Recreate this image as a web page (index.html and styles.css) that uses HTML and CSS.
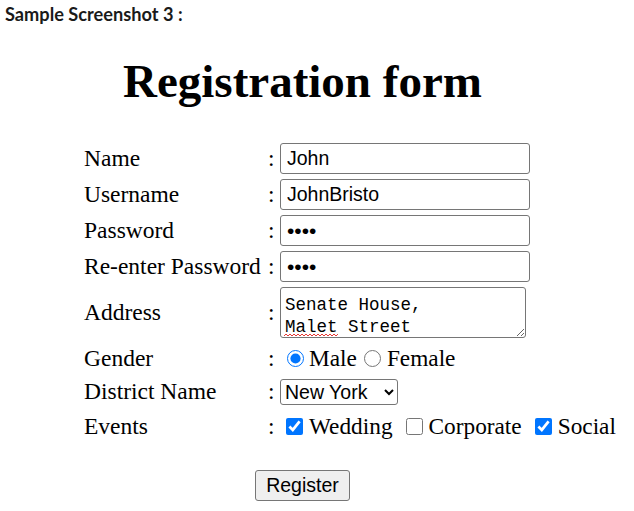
FILE: index.html
```html
<!DOCTYPE html>
<html>
<head>
<meta charset="utf-8">
<link rel="stylesheet" href="styles.css">
</head>
<body>
<div class="caption">Sample Screenshot 3 :</div>
<h1 class="title">Registration form</h1>
<form class="form">
  <div class="grid">
    <label class="lbl">Name</label><span class="colon">:</span>
    <div class="field"><input class="text" type="text" value="John"></div>

    <label class="lbl">Username</label><span class="colon">:</span>
    <div class="field"><input class="text" type="text" value="JohnBristo"></div>

    <label class="lbl">Password</label><span class="colon">:</span>
    <div class="field"><input class="text pw" type="password" value="abcd"></div>

    <label class="lbl">Re-enter Password</label><span class="colon">:</span>
    <div class="field"><input class="text pw" type="password" value="abcd"></div>

    <label class="lbl">Address</label><span class="colon">:</span>
    <div class="field area-wrap"><textarea class="area" spellcheck="false">Senate House,
Malet Street</textarea><svg class="squiggle" width="54" height="4" viewBox="0 0 54 4"><path d="M0 3 L2 1 L4 3 L6 1 L8 3 L10 1 L12 3 L14 1 L16 3 L18 1 L20 3 L22 1 L24 3 L26 1 L28 3 L30 1 L32 3 L34 1 L36 3 L38 1 L40 3 L42 1 L44 3 L46 1 L48 3 L50 1 L52 3 L54 1" fill="none" stroke="#e53935" stroke-width="1"/></svg></div>

    <label class="lbl">Gender</label><span class="colon">:</span>
    <div class="field opts gender">
      <input class="radio" type="radio" name="g" checked><span class="opt">Male</span>
      <input class="radio second" type="radio" name="g"><span class="opt">Female</span>
    </div>

    <label class="lbl">District Name</label><span class="colon">:</span>
    <div class="field"><select class="sel"><option>New York</option></select></div>

    <label class="lbl">Events</label><span class="colon">:</span>
    <div class="field opts events">
      <input class="check" type="checkbox" checked><span class="opt gap">Wedding</span>
      <input class="check" type="checkbox"><span class="opt gap">Corporate</span>
      <input class="check" type="checkbox" checked><span class="opt">Social</span>
    </div>
  </div>
  <div class="actions"><button class="btn" type="button">Register</button></div>
</form>
</body>
</html>
```
FILE: styles.css
```css
html, body {
  margin: 0;
  padding: 0;
  background: #fff;
}
body {
  font-family: "Liberation Serif", "Times New Roman", serif;
  color: #000;
}
.caption {
  font-family: Lato, "Liberation Sans", sans-serif;
  font-weight: 700;
  font-size: 18.2px;
  line-height: 22px;
  color: #1a1a1a;
  padding: 3px 0 0 5px;
}
.title {
  margin: 29px 0 0 123px;
  font-size: 47px;
  line-height: 54px;
  font-weight: 700;
}
.form {
  margin: 35px 0 0 84px;
}
.grid {
  display: grid;
  grid-template-columns: 184px 12px auto;
  row-gap: 5px;
  align-items: center;
  font-size: 23.5px;
  line-height: 27px;
}
.lbl { white-space: nowrap; }
.field {
  display: flex;
  align-items: center;
}
.text {
  box-sizing: border-box;
  width: 250px;
  height: 31px;
  margin: 0;
  padding: 1px 6px;
  border: 1px solid #767676;
  border-radius: 3px;
  font-family: "Liberation Sans", Arial, sans-serif;
  font-size: 19.5px;
  color: #000;
}
.pw { font-size: 21px; }
.area-wrap { position: relative; }
.area {
  box-sizing: border-box;
  width: 246px;
  height: 51px;
  margin: 0;
  padding: 6px 4px 0;
  border: 1px solid #767676;
  border-radius: 3px;
  font-family: "Liberation Mono", "DejaVu Sans Mono", monospace;
  font-size: 17.5px;
  line-height: 22px;
  color: #000;
  overflow: hidden;
  resize: both;
}
.squiggle {
  position: absolute;
  left: 4px;
  top: 46px;
}
.opts { font-size: 23.3px; }
.gender { height: 30px; }
.events { height: 32px; }
.radio, .check {
  width: 17px;
  height: 17px;
  accent-color: #0075ff;
}
.radio { margin: 0 5px 0 7px; }
.radio.second { margin-left: 7px; margin-right: 6px; }
.check { margin: 0 6px 0 6px; }
.gap { margin-right: 7px; }
.sel {
  box-sizing: border-box;
  height: 26px;
  width: 118px;
  margin: 0;
  border: 1px solid #767676;
  border-radius: 3px;
  font-family: "Liberation Sans", Arial, sans-serif;
  font-size: 19.5px;
  background: #fff;
  color: #000;
}
.actions {
  margin: 28px 0 0 171px;
}
.btn {
  box-sizing: border-box;
  width: 95px;
  height: 31px;
  margin: 0;
  padding: 0;
  border: 1px solid #767676;
  border-radius: 3px;
  background: #efefef;
  font-family: "Liberation Sans", Arial, sans-serif;
  font-size: 19.5px;
  color: #000;
}
```
